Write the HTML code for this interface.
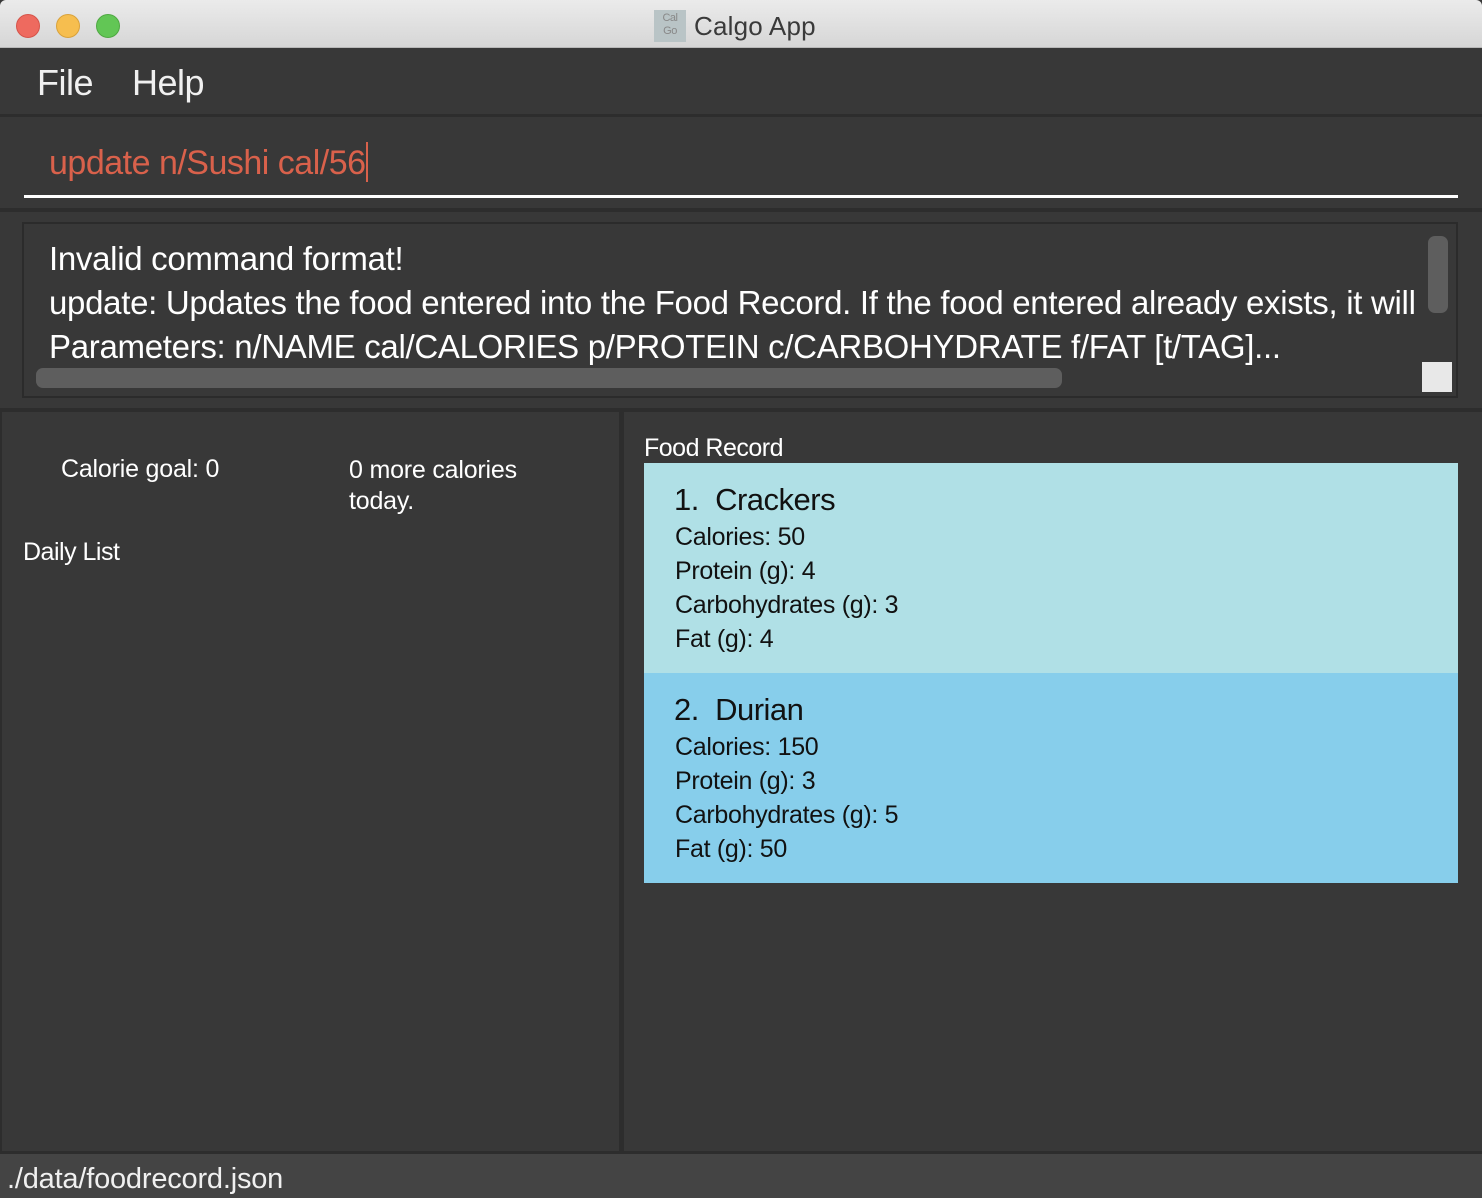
<!DOCTYPE html>
<html><head><meta charset="utf-8"><style>
*{margin:0;padding:0;box-sizing:border-box}
body{width:1482px;height:1198px;background:#383838;font-family:"Liberation Sans",sans-serif;position:relative;overflow:hidden;letter-spacing:-0.5px}
.a{position:absolute;white-space:nowrap}
</style></head><body>
<div class="a" style="left:0;top:0;width:1482px;height:48px;background:linear-gradient(#ebebeb,#d6d6d6);border-bottom:1px solid #b8b8b8;border-radius:6px 6px 0 0"></div>
<div class="a" style="left:16px;top:14px;width:24px;height:24px;border-radius:50%;background:#ee6a5f;border:1px solid #d5544a"></div>
<div class="a" style="left:56px;top:14px;width:24px;height:24px;border-radius:50%;background:#f6be4f;border:1px solid #d9a23b"></div>
<div class="a" style="left:96px;top:14px;width:24px;height:24px;border-radius:50%;background:#62c655;border:1px solid #4fa842"></div>
<div class="a" style="left:654px;top:10px;width:32px;height:32px;background:#b9c4c6;color:#888;font-size:11px;line-height:13px;text-align:center;padding-top:2px">Cal<br>Go</div>
<div class="a" style="left:694px;top:11px;font-size:26px;color:#3a3a3a;letter-spacing:0.2px">Calgo App</div>
<div class="a" style="left:37px;top:62px;font-size:36px;color:#f0f0f0">File</div>
<div class="a" style="left:132px;top:62px;font-size:36px;color:#f0f0f0">Help</div>
<div class="a" style="left:0;top:114px;width:1482px;height:3px;background:#2d2d2d"></div>
<div class="a" style="left:49px;top:142px;font-size:34px;color:#d9614b">update n/Sushi cal/56<span style="display:inline-block;width:2px;height:40px;background:#d9614b;vertical-align:-8px"></span></div>
<div class="a" style="left:24px;top:195px;width:1434px;height:3px;background:#fff"></div>
<div class="a" style="left:0;top:208px;width:1482px;height:4px;background:#2d2d2d"></div>
<div class="a" style="left:22px;top:222px;width:1436px;height:176px;border:2px solid #2b2b2b;background:#383838"></div>
<div class="a" style="left:49px;top:237px;font-size:33px;line-height:44px;color:#fff;letter-spacing:-0.3px">Invalid command format!<br>update: Updates the food entered into the Food Record. If the food entered already exists, it will<br>Parameters: n/NAME cal/CALORIES p/PROTEIN c/CARBOHYDRATE f/FAT [t/TAG]...</div>
<div class="a" style="left:1428px;top:236px;width:20px;height:77px;border-radius:7px;background:#5e5e5e"></div>
<div class="a" style="left:36px;top:368px;width:1026px;height:20px;border-radius:7px;background:#5e5e5e"></div>
<div class="a" style="left:1422px;top:362px;width:30px;height:30px;background:#e8e8e8"></div>
<div class="a" style="left:0;top:408px;width:1482px;height:4px;background:#2d2d2d"></div>
<div class="a" style="left:619px;top:412px;width:5px;height:742px;background:#2d2d2d"></div>
<div class="a" style="left:0;top:412px;width:2px;height:742px;background:#2d2d2d"></div>
<div class="a" style="left:61px;top:455px;font-size:25px;color:#fff;letter-spacing:-0.2px">Calorie goal: 0</div>
<div class="a" style="left:349px;top:455px;font-size:25px;line-height:31px;color:#fff;letter-spacing:-0.2px">0 more calories<br>today.</div>
<div class="a" style="left:23px;top:538px;font-size:25px;color:#fff">Daily List</div>
<div class="a" style="left:644px;top:434px;font-size:25px;color:#fff">Food Record</div>
<div class="a" style="left:644px;top:463px;width:814px;height:210px;background:#b0e0e6"></div>
<div class="a" style="left:644px;top:673px;width:814px;height:210px;background:#87ceeb"></div>
<div class="a" style="left:674px;top:482px;font-size:31px;color:#111">1.&nbsp; Crackers</div>
<div class="a" style="left:675px;top:520px;font-size:25px;line-height:34px;color:#111;letter-spacing:-0.3px">Calories: 50<br>Protein (g): 4<br>Carbohydrates (g): 3<br>Fat (g): 4</div>
<div class="a" style="left:674px;top:692px;font-size:31px;color:#111">2.&nbsp; Durian</div>
<div class="a" style="left:675px;top:730px;font-size:25px;line-height:34px;color:#111;letter-spacing:-0.3px">Calories: 150<br>Protein (g): 3<br>Carbohydrates (g): 5<br>Fat (g): 50</div>
<div class="a" style="left:0;top:1151px;width:1482px;height:3px;background:#2d2d2d"></div>
<div class="a" style="left:0;top:1154px;width:1482px;height:44px;background:#444"></div>
<div class="a" style="left:7px;top:1163px;font-size:29px;color:#f0f0f0;letter-spacing:-0.2px">./data/foodrecord.json</div>
</body></html>
